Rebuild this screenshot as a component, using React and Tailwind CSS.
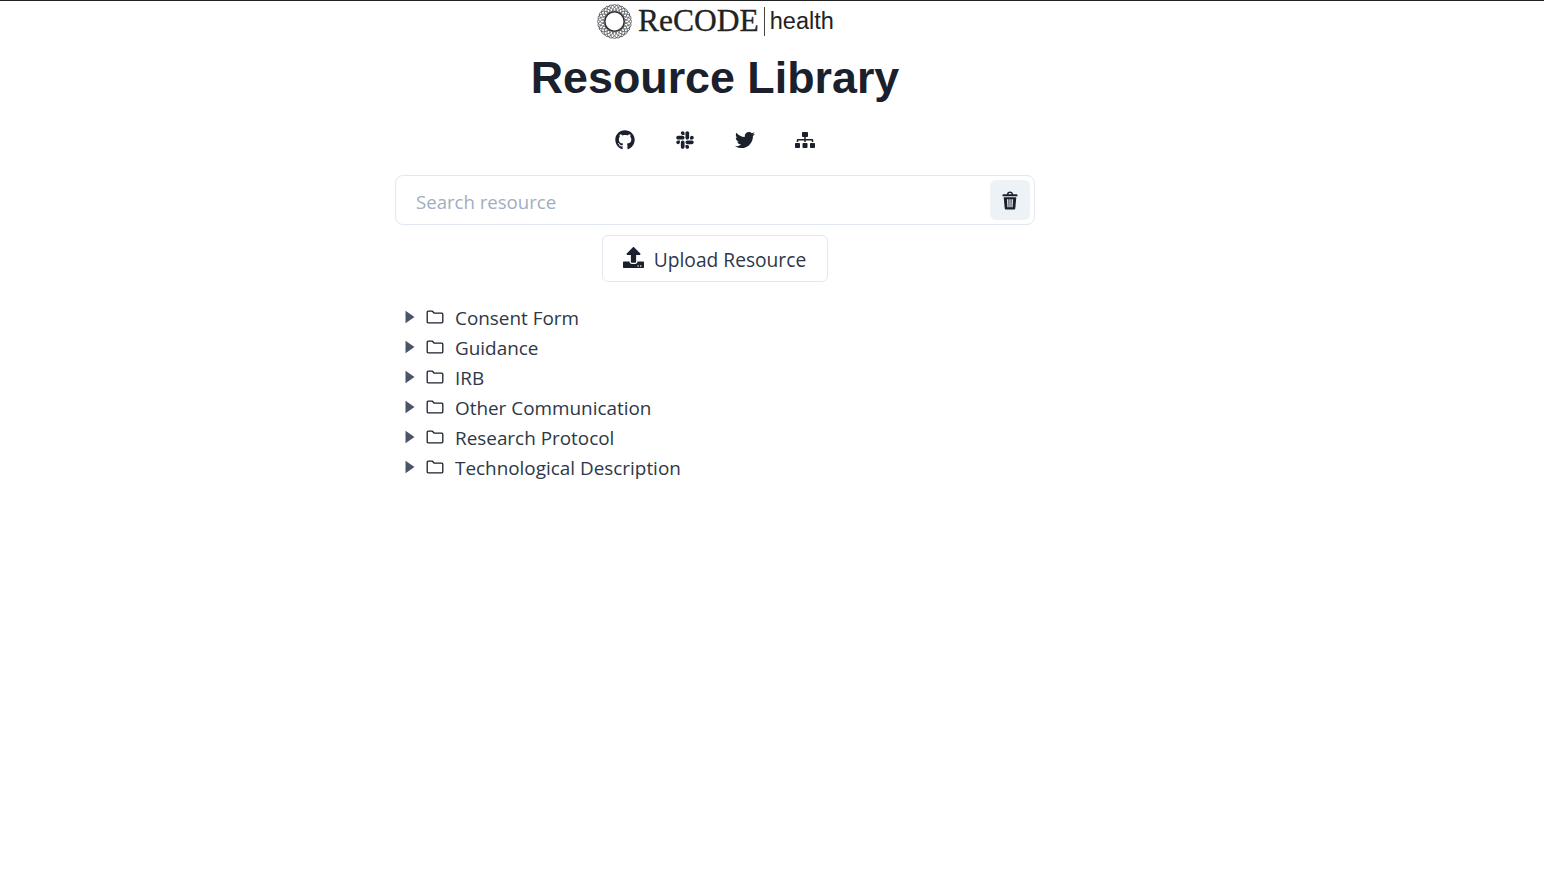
import { FaGithub, FaSlack, FaTwitter, FaSitemap, FaUpload } from 'react-icons/fa';

const folders = [
  'Consent Form',
  'Guidance',
  'IRB',
  'Other Communication',
  'Research Protocol',
  'Technological Description',
];

const socials = [FaGithub, FaSlack, FaTwitter, FaSitemap];

const FolderIcon = () => (
  <svg width="18" height="16" viewBox="0 0 18 16" fill="none" stroke="#1a202c" strokeWidth="1.3" strokeLinejoin="round" className="ml-[8px] shrink-0 -translate-y-px">
    <path d="M1.2 3.2c0-.6.4-1 1-1h4.2l1.9 2h7.5c.6 0 1 .4 1 1v7.6c0 .6-.4 1-1 1H2.2c-.6 0-1-.4-1-1z" />
  </svg>
);

const CaretIcon = () => (
  <svg width="10" height="14" viewBox="0 0 10 14" fill="#4a5568" className="ml-[10px] shrink-0 -translate-y-px">
    <path d="M0.5 0.8 9.5 7 0.5 13.2z" />
  </svg>
);

const TrashIcon = () => (
  <svg width="16" height="19" viewBox="0 0 16 19" fill="#1a202c">
    <path fillRule="evenodd" d="M5 3.2C5 1.4 6.2.6 8 .6s3 .8 3 2.6h3.6c.5 0 .9.4.9.9v1.2H.5V4.1c0-.5.4-.9.9-.9zm1.5 0h3c0-.9-.6-1.2-1.5-1.2s-1.500.3-1.500 1.200z" />
    <path fillRule="evenodd" d="M1.700 6.200h12.600l-1 11c-.1.800-.7 1.300-1.500 1.300H4.200c-.8 0-1.400-.5-1.500-1.300zM5 8.200l.4 8h1.200l-.2-8zm2.400 0v8h1.200v-8zm2.200 0-.2 8h1.200l.4-8z" />
  </svg>
);

const Logo = () => {
  const petals = Array.from({ length: 24 }, (_, i) => i * 15);
  return (
    <div className="flex h-[40px] items-center pl-[202px]">
      <svg width="35" height="35" viewBox="0 0 36 36" className="shrink-0">
        {petals.map((a) => (
          <ellipse
            key={a}
            cx="18"
            cy="8.5"
            rx="5"
            ry="8"
            fill="none"
            stroke="#55585c"
            strokeWidth="0.8"
            transform={`rotate(${a} 18 18)`}
          />
        ))}
        <circle cx="18" cy="18" r="10" fill="#fff" stroke="#333" strokeWidth="1.6" />
      </svg>
      <span className="ml-[6px] font-['Liberation_Serif',serif] text-[31.5px] leading-none text-[#222] [-webkit-text-stroke:0.3px_#222]">ReCODE</span>
      <span className="ml-[5px] h-[29px] w-px bg-[#444]" />
      <span className="ml-[5px] pt-[1px] font-['Liberation_Sans',sans-serif] text-[23.5px] leading-none text-[#222]">health</span>
    </div>
  );
};

export default function App() {
  return (
    <div className="min-h-[869px] border-t border-[#222] bg-white font-['Open_Sans',sans-serif] text-[#1a202c]">
      <div className="ml-[395px] flex w-[640px] flex-col">
        <Logo />
        <h1 className="mt-[9px] text-center font-['Liberation_Sans',sans-serif] text-[44.8px] font-bold leading-[54px] text-[#1a202c]">
          Resource Library
        </h1>
        <div className="mt-[16px] flex justify-center gap-[40px]">
          {socials.map((Icon, i) => (
            <span key={i} className="flex h-[40px] w-[20px] items-center justify-center text-[#1a202c]">
              <Icon size={20} />
            </span>
          ))}
        </div>
        <div className="mt-[15px] flex h-[50px] items-center rounded-[8px] border border-[#e2e8f0] pl-[20px] pr-[4px]">
          <span className="flex-1 pt-[4px] text-[18.6px] text-[#a0aec0]">Search resource</span>
          <button className="flex h-[40px] w-[40px] items-center justify-center rounded-[6px] bg-[#edf2f7] text-[#1a202c]">
            <TrashIcon />
          </button>
        </div>
        <button className="mx-auto mt-[10px] flex h-[47px] w-[226px] items-center justify-center gap-[10px] rounded-[6px] border border-[#e2e8f0] bg-white pr-[1px] text-[19.2px] font-medium text-[#2d3748]">
          <FaUpload size={21} className="-translate-y-px text-[#1a202c]" />
          <span className="pt-[4px]">Upload Resource</span>
        </button>
        <ul className="mt-[21px] flex flex-col">
          {folders.map((name) => (
            <li key={name} className="flex h-[30px] items-center text-[18.9px] text-[#2d3748]">
              <CaretIcon />
              <span className="ml-[3px] flex items-center">
                <FolderIcon />
              </span>
              <span className="ml-[11px]">{name}</span>
            </li>
          ))}
        </ul>
      </div>
    </div>
  );
}
